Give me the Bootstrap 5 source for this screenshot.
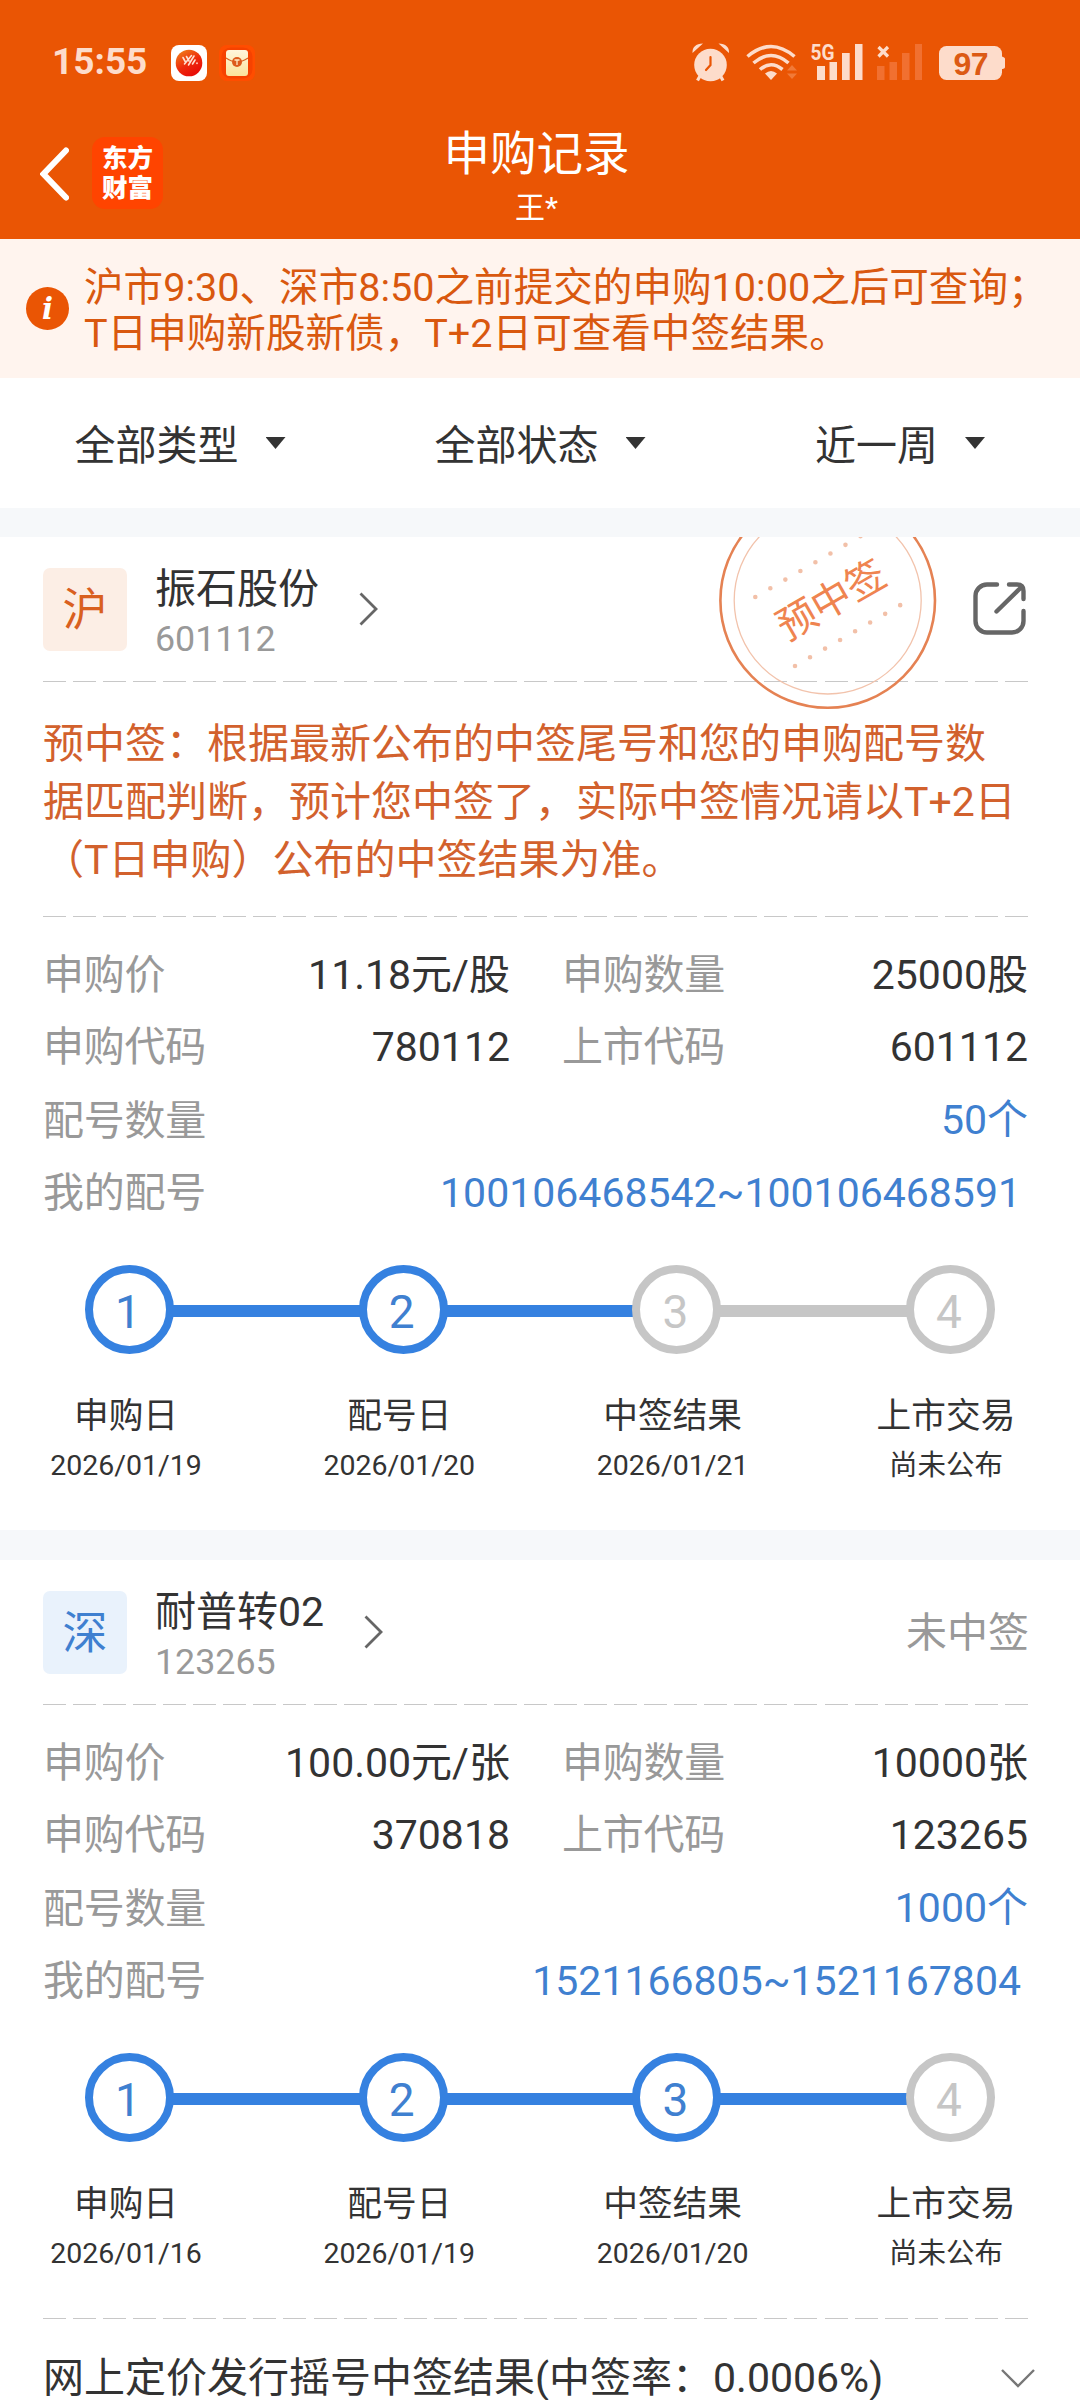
<!DOCTYPE html>
<html lang="zh-CN">
<head>
<meta charset="utf-8">
<meta name="viewport" content="width=device-width, initial-scale=1">
<title>申购记录</title>
<link href="https://cdn.jsdelivr.net/npm/bootstrap@5.3.0/dist/css/bootstrap.min.css" rel="stylesheet">
<style>
:root { --brand: #ea5504; --blue: #3581e0; --bluetext: #3f80d0; --pale: #fddccb; }
html, body { width: 1080px; height: 2400px; overflow: hidden; }
body { font-family: Roboto, "Noto Sans CJK SC", sans-serif; font-size: 41px; line-height: 1; color: #333; background: #fff; }
svg { display: block; flex: none; }
.app-header { height: 239px; background: var(--brand); color: #fff; }
.status-bar { height: 90px; padding: 33px 75px 0 52px; }
.clock { font-size: 37px; font-weight: 700; color: var(--pale); width: 119px; line-height: 54px; margin-top: 2px; }
.app-icons { margin-top: 11px; }
.title-bar { height: 149px; padding-left: 40px; }
.brand-logo { width: 71px; height: 72px; border-radius: 13px; background: #ff4400; font: 900 25.5px/30px Roboto, "Noto Sans CJK SC", sans-serif; padding-top: 6px; margin-left: 23px; }
.title-text { inset: 0 7px 0 0; }
.title-main { font-size: 46.5px; line-height: 60px; margin-top: 34px; }
.title-sub { font-size: 30px; line-height: 40px; margin-top: 4px; }
.notice { height: 139px; background: #fff4ee; color: #d9580f; font-size: 39.6px; line-height: 46px; padding: 0 0 1px 26px; white-space: nowrap; }
.notice-text { margin-left: 15px; padding-top: 5px; }
.filters { height: 130px; }
.filters .filter-item { gap: 27px; padding-top: 7px; }
.caret { width: 20px; height: 12px; background: #333; clip-path: polygon(0 0, 100% 0, 50% 100%); margin-top: -7px; }
.band { background: #f6f8fa; }
.record { padding: 0 52px 0 43px; }
.rec-head { height: 144px; }
.market { width: 84px; height: 83px; border-radius: 7px; font-size: 45px; padding-top: 2px; }
.market-sh { background: #fceee5; color: #d9601f; }
.market-sz { background: #e9f2fc; color: var(--bluetext); }
.rec-name { margin-left: 28px; padding-top: 10px; }
.rec-name .nm { line-height: 50px; white-space: nowrap; }
.rec-name .cd { font-size: 35.8px; line-height: 50px; color: #999; }
.dash { height: 1px; background: repeating-linear-gradient(90deg, #c8c8c8 0 23px, transparent 23px 30.06px); }
.hint { color: #d2612d; line-height: 58px; padding: 33px 0 27px; white-space: nowrap; }
.facts { padding-top: 22px; }
.fact-row { height: 72.5px; }
.fact-row .k { color: #999; letter-spacing: -.25px; }
.fact-row .k.low { padding-top: 2px; }
.fact-row .half { width: 467px; }
.fact-row .half + .half { width: 466px; margin-left: 52px; }
.blue { color: var(--bluetext); }
.track { padding: 36px 33px 0 42px; }
.dot { width: 89px; height: 89px; border: 8.5px solid #c6c6c6; border-radius: 50%; color: #c6c6c6; font-size: 46px; padding-top: 4px; padding-right: 3px; flex: none; }
.bar { height: 12px; background: #c6c6c6; margin: 3px -2px 0; }
.dot.on { border-color: var(--blue); color: var(--bluetext); background: #fff; }
.bar.on { background: var(--blue); }
.step { width: 164px; }
.step .s1 { font-size: 34.7px; line-height: 50px; white-space: nowrap; }
.step .s2 { font-size: 28.5px; line-height: 50px; white-space: nowrap; }
.steps { padding: 37px 0 0 1px; }
.stamp { left: 716px; top: 0; }
</style>
<script src="https://cdn.jsdelivr.net/npm/bootstrap@5.3.0/dist/js/bootstrap.bundle.min.js"></script>
</head>
<body>
<header class="app-header">
  <div class="status-bar d-flex align-items-start">
    <div class="clock">15:55</div>
    <svg class="app-icons" width="84" height="38" viewBox="0 0 84 38">
      <defs>
        <linearGradient id="ball" x1="0" y1="0" x2=".6" y2="1"><stop offset="0" stop-color="#f08a1c"/><stop offset=".6" stop-color="#ee2a0c"/><stop offset="1" stop-color="#e80c08"/></linearGradient>
        <linearGradient id="env" x1="0" y1="0" x2="0" y2="1"><stop offset="0" stop-color="#fff6dc"/><stop offset="1" stop-color="#fbe39a"/></linearGradient>
      </defs>
      <rect x="0" y="1" width="36" height="36" rx="8" fill="#fff"/>
      <circle cx="18" cy="19" r="13.3" fill="url(#ball)"/>
      <path d="M12 13.5l2.2 4M15.5 12.5l2.5 4.5M13.500 20l7-8.500M17.500 21l5.500-9M21.500 20l2.500-4M26 19v.5" stroke="#ffe0d2" stroke-width="1.6" stroke-linecap="round" fill="none"/>
      <rect x="48" y="1" width="36" height="36" rx="8" fill="#ff4d00"/>
      <rect x="50.500" y="3.500" width="31" height="31" rx="9" fill="#f64200"/>
      <rect x="55" y="6" width="22" height="26" rx="3" fill="url(#env)"/>
      <path d="M55 14q6 4 11 4t11-4" stroke="#d9601f" stroke-width="1.200" fill="none"/>
      <circle cx="66" cy="18" r="5" fill="#dd5a1c"/>
      <path d="M63.500 16h5M66 16v5" stroke="#ffe9c2" stroke-width="1.300"/>
    </svg>
    <svg class="ms-auto" width="313" height="50" viewBox="692 33 313 50" fill="#fddccb">
      <circle cx="710.500" cy="65" r="16.300"/>
      <path d="M692.500 53q-.5-9 10.500-9.500zM729 53q.5-9-10.500-9.500z"/>
      <path d="M700 76l-2.500 4.500M720.500 76l2.500 4.500" stroke="#fddccb" stroke-width="3.200"/>
      <path d="M710.500 57v8l-4.500 5" stroke="#ea5504" stroke-width="2.200" fill="none" stroke-linecap="round"/>
      <g fill="none" stroke="#fddccb" stroke-width="3.600">
        <path d="M747.500 56.500q23.500-20 47 0"/>
        <path d="M753.500 63q17.500-15 35 0"/>
        <path d="M760 69.500q11-9.500 22.500 0"/>
      </g>
      <path d="M765 73.500q6-5 12 0l-6 6.500z"/>
      <path d="M787 70.500l5-5.500 5 5.500zM787 73.500l5 5.500 5-5.500z" fill="#f17a38"/>
      <text x="810.500" y="59.500" font-family="Roboto, sans-serif" font-weight="700" font-size="22.500" textLength="24" lengthAdjust="spacingAndGlyphs">5G</text>
      <path d="M817 66h8v14h-8zM829.500 62h7.500v18h-7.500zM842 53h7.700v27H842zM855 44h7.500v36H855z"/>
      <path d="M877 66h7.500v14H877zM889.500 62h7.500v18h-7.500zM902 53h7.500v27H902zM915 44h7v36h-7z" fill="#f17030"/>
      <path d="M878.500 47l9.500 9.500M888 47l-9.500 9.500" stroke="#fddccb" stroke-width="3.200"/>
      <rect x="939" y="46" width="63" height="34" rx="7.500"/>
      <path d="M1001 56.500q4 .5 4 2.500v8q0 2-4 2z"/>
      <text x="971" y="74.800" text-anchor="middle" font-family="Liberation Sans, sans-serif" font-weight="700" font-size="32" fill="#dc5a14" textLength="35">97</text>
    </svg>
  </div>
  <div class="title-bar d-flex position-relative">
    <svg style="margin-top:57px" width="29" height="54" viewBox="0 0 29 54"><path d="M26 3.500L3.500 27 26 50.500" fill="none" stroke="#fff" stroke-width="6" stroke-linecap="round" stroke-linejoin="miter"/></svg>
    <div class="brand-logo text-center" style="margin-top:47px">东方<br>财富</div>
    <div class="title-text position-absolute text-center">
      <div class="title-main">申购记录</div>
      <div class="title-sub">王*</div>
    </div>
  </div>
</header>

<div class="notice d-flex align-items-center">
  <svg width="43" height="43" viewBox="0 0 43 43"><circle cx="21.500" cy="21.500" r="21.500" fill="#ea5504"/><text x="21.500" y="32" text-anchor="middle" font-family="DejaVu Serif, serif" font-style="italic" font-weight="700" font-size="29" fill="#fff">i</text></svg>
  <div class="notice-text">沪市9:30、深市8:50之前提交的申购10:00之后可查询；<br>T日申购新股新债，T+2日可查看中签结果。</div>
</div>

<nav class="filters row g-0">
  <div class="col-4 d-flex justify-content-center align-items-center filter-item"><span>全部类型</span><i class="caret"></i></div>
  <div class="col-4 d-flex justify-content-center align-items-center filter-item"><span>全部状态</span><i class="caret"></i></div>
  <div class="col-4 d-flex justify-content-center align-items-center filter-item"><span>近一周</span><i class="caret"></i></div>
</nav>

<div class="band" style="height:29px"></div>

<section class="record position-relative" style="height:993px">
  <div class="rec-head d-flex align-items-center">
    <div class="market market-sh d-flex align-items-center justify-content-center">沪</div>
    <div class="rec-name"><div class="nm">振石股份</div><div class="cd">601112</div></div>
    <svg style="margin-left:40px" width="20" height="34" viewBox="0 0 20 34"><path d="M1.500 1.500L17 17 1.500 32.500" fill="none" stroke="#666" stroke-width="2.800"/></svg>
    <svg class="ms-auto" style="margin-right:1.500px" width="54" height="54" viewBox="0 0 54 54" fill="none" stroke="#666" stroke-width="4.400" stroke-linecap="round"><path d="M24 2.500H14A11.500 11.500 0 0 0 2.500 14v25A11.500 11.500 0 0 0 14 50.500h25A11.500 11.500 0 0 0 50.500 39V29"/><path d="M36 2.500h8q6.500 0 6.500 6.500v8M23.500 29.500L48.500 5"/></svg>
  </div>
  <div class="dash"></div>
  <svg class="stamp position-absolute" width="224" height="174" viewBox="716 537 224 174">
    <circle cx="827.700" cy="600.500" r="107.300" fill="none" stroke="#e58253" stroke-width="2.600"/>
    <circle cx="827.700" cy="600.500" r="93.500" fill="none" stroke="#f2c3ac" stroke-width="1.300"/>
    <g fill="none" stroke="#f2c0a8" stroke-width="4.600" stroke-linecap="round" stroke-dasharray="0 17.360">
      <path d="M755.300 597l106-61.300"/>
      <path d="M795 666l106-61.300"/>
    </g>
    <text transform="translate(831 599.500) rotate(-30)" text-anchor="middle" y="14.500" font-size="39.500" font-weight="400" fill="#ef8450" font-family="Noto Sans CJK SC, sans-serif">预中签</text>
  </svg>
  <div class="hint">预中签：根据最新公布的中签尾号和您的申购配号数<br>据匹配判断，预计您中签了，实际中签情况请以T+2日<br>（T日申购）公布的中签结果为准。</div>
  <div class="dash"></div>
  <div class="facts">
    <div class="fact-row d-flex align-items-center">
      <div class="half d-flex justify-content-between"><span class="k">申购价</span><span>11.18元/股</span></div>
      <div class="half d-flex justify-content-between"><span class="k">申购数量</span><span>25000股</span></div>
    </div>
    <div class="fact-row d-flex align-items-center">
      <div class="half d-flex justify-content-between"><span class="k">申购代码</span><span>780112</span></div>
      <div class="half d-flex justify-content-between"><span class="k">上市代码</span><span>601112</span></div>
    </div>
    <div class="fact-row d-flex align-items-center justify-content-between"><span class="k low">配号数量</span><span class="blue">50个</span></div>
    <div class="fact-row d-flex align-items-center justify-content-between"><span class="k low">我的配号</span><span class="blue" style="margin-right:7px;padding-top:1px">100106468542~100106468591</span></div>
  </div>
  <div class="track d-flex align-items-center">
    <div class="dot on d-flex align-items-center justify-content-center">1</div><div class="bar on flex-grow-1"></div>
    <div class="dot on d-flex align-items-center justify-content-center">2</div><div class="bar on flex-grow-1"></div>
    <div class="dot d-flex align-items-center justify-content-center">3</div><div class="bar flex-grow-1"></div>
    <div class="dot d-flex align-items-center justify-content-center">4</div>
  </div>
  <div class="steps d-flex justify-content-between text-center">
    <div class="step"><div class="s1">申购日</div><div class="s2">2026/01/19</div></div>
    <div class="step"><div class="s1">配号日</div><div class="s2">2026/01/20</div></div>
    <div class="step"><div class="s1">中签结果</div><div class="s2">2026/01/21</div></div>
    <div class="step"><div class="s1">上市交易</div><div class="s2">尚未公布</div></div>
  </div>
</section>

<div class="band" style="height:30px"></div>

<section class="record">
  <div class="rec-head d-flex align-items-center">
    <div class="market market-sz d-flex align-items-center justify-content-center">深</div>
    <div class="rec-name"><div class="nm">耐普转02</div><div class="cd">123265</div></div>
    <svg style="margin-left:40px" width="20" height="34" viewBox="0 0 20 34"><path d="M1.500 1.500L17 17 1.500 32.500" fill="none" stroke="#666" stroke-width="2.800"/></svg>
    <span class="ms-auto" style="color:#999;padding-top:3px;margin-right:-1px">未中签</span>
  </div>
  <div class="dash"></div>
  <div class="facts">
    <div class="fact-row d-flex align-items-center">
      <div class="half d-flex justify-content-between"><span class="k">申购价</span><span>100.00元/张</span></div>
      <div class="half d-flex justify-content-between"><span class="k">申购数量</span><span>10000张</span></div>
    </div>
    <div class="fact-row d-flex align-items-center">
      <div class="half d-flex justify-content-between"><span class="k">申购代码</span><span>370818</span></div>
      <div class="half d-flex justify-content-between"><span class="k">上市代码</span><span>123265</span></div>
    </div>
    <div class="fact-row d-flex align-items-center justify-content-between"><span class="k low">配号数量</span><span class="blue">1000个</span></div>
    <div class="fact-row d-flex align-items-center justify-content-between"><span class="k low">我的配号</span><span class="blue" style="margin-right:7px;padding-top:1px">1521166805~1521167804</span></div>
  </div>
  <div class="track d-flex align-items-center">
    <div class="dot on d-flex align-items-center justify-content-center">1</div><div class="bar on flex-grow-1"></div>
    <div class="dot on d-flex align-items-center justify-content-center">2</div><div class="bar on flex-grow-1"></div>
    <div class="dot on d-flex align-items-center justify-content-center">3</div><div class="bar on flex-grow-1"></div>
    <div class="dot d-flex align-items-center justify-content-center">4</div>
  </div>
  <div class="steps d-flex justify-content-between text-center">
    <div class="step"><div class="s1">申购日</div><div class="s2">2026/01/16</div></div>
    <div class="step"><div class="s1">配号日</div><div class="s2">2026/01/19</div></div>
    <div class="step"><div class="s1">中签结果</div><div class="s2">2026/01/20</div></div>
    <div class="step"><div class="s1">上市交易</div><div class="s2">尚未公布</div></div>
  </div>
  <div class="dash" style="margin-top:39px"></div>
  <div class="d-flex justify-content-between align-items-center" style="height:81px;padding-top:38px;margin-right:-7px">
    <span class="text-nowrap">网上定价发行摇号中签结果(中签率：0.0006%)</span>
    <svg width="34" height="20" viewBox="0 0 34 20"><path d="M1 1l16 16L33 1" fill="none" stroke="#777" stroke-width="2.400"/></svg>
  </div>
</section>
</body>
</html>
